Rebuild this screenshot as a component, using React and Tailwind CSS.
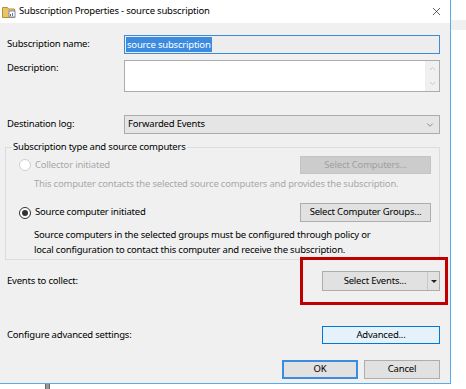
import React from "react";
import { X, ChevronDown, ChevronUp } from "lucide-react";

const font = { fontFamily: '"Noto Sans", "Segoe UI", sans-serif' };

function WinButton({ children, className = "" }) {
  return (
    <div
      className={`flex items-center justify-center border border-[#adadad] bg-[#e1e1e1] text-black ${className}`}
    >
      {children}
    </div>
  );
}

function Radio({ checked, disabled }) {
  return (
    <div
      className={`w-[12px] h-[12px] rounded-full border flex items-center justify-center bg-white ${
        disabled ? "border-[#d0d0d0]" : "border-[#333]"
      }`}
    >
      {checked && <div className="w-[6px] h-[6px] rounded-full bg-[#333]" />}
    </div>
  );
}

function AppIcon() {
  return (
    <svg width="14" height="12" viewBox="0 0 14 12">
      <path d="M0.5 1.5h5l1 1.5h6v8.5h-12z" fill="#e8c56a" stroke="#b78f2c" />
      <rect x="7" y="5" width="6" height="6" fill="#fff" stroke="#7a8aa0" />
      <rect x="8" y="8" width="1" height="2" fill="#d83b3b" />
      <rect x="10" y="7" width="1" height="3" fill="#3b7bd8" />
    </svg>
  );
}

export default function App() {
  return (
    <div className="w-[466px] h-[389px] bg-white flex flex-col overflow-hidden" style={font}>
      <div className="flex h-[384px]">
        <div className="w-[451px] flex flex-col border-r border-b border-[#5aa9e8] relative">
          {/* title bar */}
          <div className="h-[23px] bg-white flex items-center shrink-0">
            <div className="ml-[2px] w-[14px] flex items-center">
              <AppIcon />
            </div>
            <div className="ml-[3px] text-[9.5px] tracking-[-0.2px] text-black">
              Subscription Properties - source subscription
            </div>
            <div className="ml-auto mr-[7px] flex items-center">
              <X className="w-[13px] h-[13px] text-[#222]" strokeWidth={1.3} />
            </div>
          </div>

          {/* body */}
          <div className="flex-1 bg-[#f0f0f0] flex flex-col pl-[7px] pr-[10px] text-[9.5px] tracking-[-0.2px] text-black">
            <div className="flex items-center mt-[12px] h-[19px]">
              <div className="w-[117px]">Subscription name:</div>
              <div className="flex-1 h-full border border-[#3d8ad8] bg-[#ededed] flex items-center px-[1px]">
                <span className="bg-[#3b8be0] text-white leading-[15px] px-[1px]">source subscription</span>
              </div>
            </div>

            <div className="flex mt-[6px] h-[32px]">
              <div className="w-[117px] pt-[1px]">Description:</div>
              <div className="flex-1 h-full border border-[#acacac] bg-white flex justify-end">
                <div className="w-[14px] bg-[#f0f0f0] flex flex-col items-center justify-between py-[3px]">
                  <ChevronUp className="w-[9px] h-[9px] text-[#bbb]" strokeWidth={2} />
                  <ChevronDown className="w-[9px] h-[9px] text-[#bbb]" strokeWidth={2} />
                </div>
              </div>
            </div>

            <div className="flex items-center mt-[23px] h-[19px]">
              <div className="w-[117px]">Destination log:</div>
              <div className="flex-1 h-full border border-[#acacac] bg-[#e5e5e5] flex items-center pl-[3px] pr-[4px]">
                <span>Forwarded Events</span>
                <ChevronDown className="ml-auto w-[10px] h-[10px] text-[#555]" strokeWidth={1.5} />
              </div>
            </div>

            {/* group box */}
            <div className="relative mt-[13px] ml-[-2px] h-[113px] border border-[#dcdcdc] pt-[8px]">
              <div className="absolute left-[6px] top-[-9px] bg-[#f0f0f0] px-[1px] leading-[16px]">
                Subscription type and source computers
              </div>
              <div className="flex items-center h-[18px] pl-[13px] pr-[8px]">
                <Radio disabled />
                <span className="ml-[4px] text-[#a8a8a8]">Collector initiated</span>
                <div className="ml-auto w-[131px] h-full flex items-center justify-center border border-[#c4c4c4] bg-[#cccccc] text-[#a0a0a0]">
                  Select Computers...
                </div>
              </div>
              <div className="pl-[28px] mt-[3px] text-[#a8a8a8] leading-[14px]">
                This computer contacts the selected source computers and provides the subscription.
              </div>
              <div className="flex items-center h-[19px] pl-[13px] pr-[8px] mt-[12px]">
                <Radio checked />
                <span className="ml-[4px]">Source computer initiated</span>
                <WinButton className="ml-auto w-[131px] h-full">Select Computer Groups...</WinButton>
              </div>
              <div className="pl-[28px] mt-[5px] leading-[15px]">
                Source computers in the selected groups must be configured through policy or
                <br />
                local configuration to contact this computer and receive the subscription.
              </div>
            </div>

            <div className="flex items-center mt-[11px] h-[20px]">
              <div>Events to collect:</div>
              <div className="ml-auto w-[118px] h-full flex border border-[#adadad] bg-[#e1e1e1]">
                <div className="flex-1 flex items-center justify-center">Select Events...</div>
                <div className="w-[12px] border-l border-[#c8c8c8] flex items-center justify-center">
                  <div className="w-0 h-0 border-l-[3px] border-r-[3px] border-t-[3px] border-l-transparent border-r-transparent border-t-[#222]" />
                </div>
              </div>
            </div>

            <div className="flex items-center mt-[35px] h-[18px]">
              <div>Configure advanced settings:</div>
              <div className="ml-auto w-[118px] h-full flex items-center justify-center border border-[#0078d7] bg-[#e5f1fb]">
                Advanced...
              </div>
            </div>

            <div className="flex justify-end gap-[6px] mt-[16px] h-[19px]">
              <div className="w-[76px] h-full flex items-center justify-center border-2 border-[#3b8be0] bg-[#e1e1e1]">
                OK
              </div>
              <WinButton className="w-[76px] h-full">Cancel</WinButton>
            </div>
          </div>

          {/* annotation highlight */}
          <div className="absolute left-[300px] top-[257px] w-[148px] h-[48px] border-[3px] border-[#c00000]" />
        </div>
        <div className="flex-1 flex flex-col">
          <div className="mt-[20px] h-[10px] bg-[#f0f0f0]" />
        </div>
      </div>
      <div className="flex h-[5px]">
        <div className="ml-[45px] w-[5px] h-full bg-[#9a9a9a] border-x border-[#666]" />
      </div>
    </div>
  );
}
